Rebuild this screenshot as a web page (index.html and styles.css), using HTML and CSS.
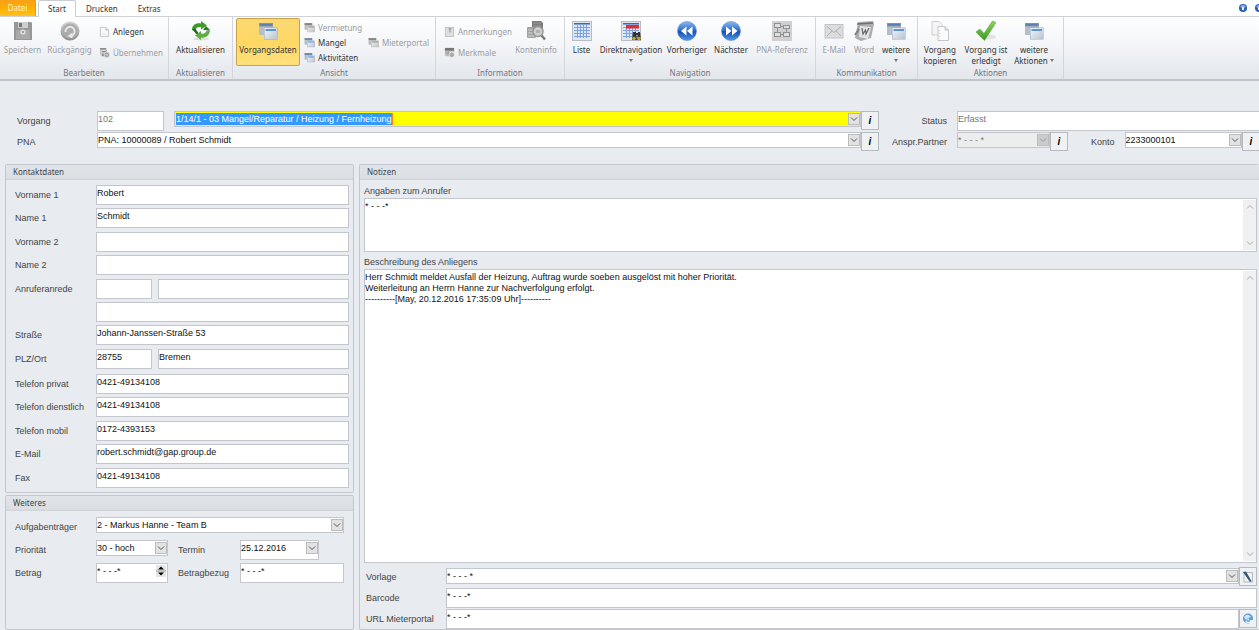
FILE: index.html
```html
<!DOCTYPE html>
<html lang="de">
<head>
<meta charset="utf-8">
<title>Vorgang 102</title>
<link rel="stylesheet" href="styles.css">
</head>
<body>
<svg class="defs" aria-hidden="true">
  <defs>
    <linearGradient id="gBlue" x1="0" y1="0" x2="0" y2="1"><stop offset="0" stop-color="#8fb9ee"/><stop offset=".45" stop-color="#2f6fd0"/><stop offset=".55" stop-color="#1650b4"/><stop offset="1" stop-color="#4f9bea"/></linearGradient>
    <linearGradient id="gWin" x1="0" y1="0" x2="1" y2="1"><stop offset="0" stop-color="#f2f5f9"/><stop offset="1" stop-color="#b9c4d3"/></linearGradient>
    <linearGradient id="gGreen" x1="0" y1="0" x2="0" y2="1"><stop offset="0" stop-color="#8ed45c"/><stop offset="1" stop-color="#3c9a28"/></linearGradient>
    <linearGradient id="gGray" x1="0" y1="0" x2="0" y2="1"><stop offset="0" stop-color="#d4d4d4"/><stop offset="1" stop-color="#8c8c8c"/></linearGradient>
  </defs>
  <symbol id="windows" viewBox="0 0 20 20">
    <rect x="1" y="2" width="14" height="12" fill="#b4bfcc"/><rect x="1" y="2" width="14" height="3.500" fill="#8193a9"/><rect x="2" y="3" width="12" height="1.500" fill="#5b7fb2"/>
    <rect x="6" y="6.500" width="13.500" height="12" fill="#9aa7b8"/><rect x="6.500" y="7" width="12.500" height="11" fill="url(#gWin)"/><rect x="7.500" y="8" width="10.500" height="2" fill="#5f93d8"/>
  </symbol>
  <symbol id="save" viewBox="0 0 20 20">
    <path d="M1 1h17l1 1v17H1z" fill="#979797"/><rect x="5" y="1" width="10" height="6" fill="#cfcfcf"/><rect x="6" y="2" width="3" height="4" fill="#777"/><rect x="3" y="9" width="14" height="9" fill="#a9a9a9"/><circle cx="10" cy="11" r="2.600" fill="#e0e0e0"/><circle cx="10" cy="11" r="1" fill="#888"/>
  </symbol>
  <symbol id="undo" viewBox="0 0 20 20">
    <circle cx="10" cy="10" r="9.500" fill="url(#gGray)"/><circle cx="10" cy="10" r="7.500" fill="#acacac"/><path d="M5.500 11a4.600 4.600 0 1 1 6 3.800" fill="none" stroke="#e8e8e8" stroke-width="2"/><path d="M12.500 11.500v6l-5-2.500z" fill="#e8e8e8"/>
  </symbol>
  <symbol id="page" viewBox="0 0 12 12">
    <path d="M1.500 1.500h6l3 3v7h-9z" fill="#fafafa" stroke="#c3c3c3"/><path d="M7.500 1.500v3h3" fill="#ddd" stroke="#c3c3c3"/><path d="M3 9h6" stroke="#ddd"/>
  </symbol>
  <symbol id="apply" viewBox="0 0 12 12">
    <path d="M1 1h7v2H1zM3 4h5v2H3zM3 7h4v3H3z" fill="#8c8c8c"/><path d="M2 3v6M8 3v4" stroke="#aaa"/><circle cx="8.500" cy="8.500" r="3" fill="#9b9b9b" stroke="#ddd"/><path d="M7 8.500h3" stroke="#eee"/>
  </symbol>
  <symbol id="refresh" viewBox="0 0 20 20">
    <ellipse cx="10" cy="18" rx="8" ry="1.500" fill="#ddd"/>
    <path d="M1 9C1 4 5 1.500 10 2.500V0l6 4.500-6 4V6C7 5.500 5 6.500 4.500 9z" fill="#3f9a2b"/><path d="M1 9c2 1 3 2 4 4h3L4 7z" fill="#226c16"/>
    <path d="M19 9c0 5-4 8.500-9 7.500V19l-6-4.500 6-4.500v2.500c3 .5 5-.5 5.500-3z" fill="#5eae45"/><path d="M19 9l-4-4-3 4h3.500z" fill="#2c7b1d"/>
  </symbol>
  <symbol id="note" viewBox="0 0 12 12">
    <rect x="1.500" y="1.500" width="9" height="10" fill="#dedede" stroke="#c2c2c2"/><path d="M5 3h3M6.500 3v4" stroke="#888"/>
  </symbol>
  <symbol id="features" viewBox="0 0 12 12">
    <rect x="1" y="1" width="10" height="9" fill="#c3c3c3"/><rect x="1" y="1" width="10" height="3" fill="#777"/><path d="M1 6.500h10M4.500 4v6" stroke="#999"/><circle cx="8.500" cy="8.500" r="3" fill="#aaa" stroke="#eee"/>
  </symbol>
  <symbol id="account" viewBox="0 0 20 20">
    <path d="M6 0h9l2 2v7H6z" fill="#7d7d7d"/><path d="M7 2h8M7 5h8" stroke="#999"/><rect x="1" y="6" width="9" height="11" rx="1" fill="#a2a2a2"/><path d="M2 9h7M2 12h7M2 15h7" stroke="#d5d5d5"/><circle cx="12" cy="10.500" r="5" fill="#cfcfcf" stroke="#979797" stroke-width="1.500"/><path d="M10 9h4v3h-4z" fill="#b0b0b0"/><path d="M15.500 14.500l3.500 4" stroke="#7a7a7a" stroke-width="2.500"/>
  </symbol>
  <symbol id="grid" viewBox="0 0 20 20">
    <rect x=".5" y=".5" width="19" height="19" fill="#e1e6ee" stroke="#b5bcc6"/><rect x="2" y="2" width="16" height="1.500" fill="#356ac0"/><rect x="2" y="4" width="16" height="13" fill="#dbe6f6"/><path d="M2 6.500h16M2 9.500h16M2 12.500h16M2 15.500h16M5.500 3v14M8.500 3v14M11.500 3v14M14.500 3v14" stroke="#7ea3dc"/>
  </symbol>
  <symbol id="gridfind" viewBox="0 0 20 20">
    <use href="#grid" width="20" height="20"/><rect x="5" y="4" width="13" height="3.500" fill="#e02d2d"/><path d="M12 11h3l1 8h-5zM17 11h2l1 8h-4z" fill="#333"/><circle cx="13" cy="17.500" r="1.800" fill="#c9a227"/><circle cx="18" cy="17.500" r="1.800" fill="#c9a227"/><path d="M14 13h4" stroke="#333" stroke-width="2"/>
  </symbol>
  <symbol id="prev" viewBox="0 0 20 20">
    <circle cx="10" cy="10" r="9.500" fill="url(#gBlue)" stroke="#5d86c6" stroke-width=".6"/><path d="M9.500 5.500v9L4 10zM15.500 5.500v9L10 10z" fill="#fff"/>
  </symbol>
  <symbol id="next" viewBox="0 0 20 20">
    <circle cx="10" cy="10" r="9.500" fill="url(#gBlue)" stroke="#5d86c6" stroke-width=".6"/><path d="M5 5.500v9l5.500-4.500zM11 5.500v9l5.500-4.500z" fill="#fff"/>
  </symbol>
  <symbol id="tree" viewBox="0 0 20 20">
    <rect width="20" height="20" fill="#d0d0d0"/><g fill="#dedede" stroke="#909090"><rect x="2.500" y="2.500" width="6" height="4"/><rect x="11.500" y="4.500" width="6" height="3"/><rect x="2.500" y="11.500" width="6" height="4"/><rect x="11.500" y="11.500" width="6" height="4"/></g><path d="M5.500 6.500v5M8.500 13.500h3M14.500 7.500v4M8.500 5.500h3" fill="none" stroke="#909090"/>
  </symbol>
  <symbol id="mail" viewBox="0 0 20 20">
    <rect x="1" y="3.500" width="18" height="13.500" fill="#dcdcdc" stroke="#c4c4c4"/><path d="M3 5.500l7 6 7-6M3 15l5-5M17 15l-5-5" fill="none" stroke="#b0b0b0"/>
  </symbol>
  <symbol id="word" viewBox="0 0 20 20">
    <path d="M4 1l15-1 1 3-3 14-10 3-6-3 1-5z" fill="#adadad"/><path d="M6 5l11 1-3 12-9-2z" fill="#e3e3e3"/><path d="M3 3l16-1" stroke="#6f6f6f" stroke-width="1.500"/><path d="M8 7l1 6 2.500-4 .5 4 3-6" fill="none" stroke="#666" stroke-width="1.200"/><path d="M1 14l4-6" stroke="#808080" stroke-width="2"/>
  </symbol>
  <symbol id="copy" viewBox="0 0 20 20">
    <path d="M2 .5h7l3 3V14H2z" fill="#f5f5f5" stroke="#cdcdcd"/><path d="M8 5.500h7l3.500 3.500v10.500H8z" fill="#fbfbfb" stroke="#c6c6c6"/><path d="M15 5.500V9h3.500" fill="#ddd" stroke="#c6c6c6"/><path d="M9.500 9v8" stroke="#ccc" stroke-dasharray="1 2"/>
  </symbol>
  <symbol id="check" viewBox="0 0 20 20">
    <ellipse cx="12" cy="16" rx="8" ry="2.500" fill="#e2e2e2"/><path d="M0 11l4-3 4 4.500L16.500 0 20 1.500 8.500 19.500z" fill="url(#gGreen)" stroke="#58a83c" stroke-width=".6"/>
  </symbol>
  <symbol id="chev" viewBox="0 0 8 8"><path d="M1 2.500l3 3 3-3" fill="none" stroke="currentColor"/></symbol>
  <symbol id="chevup" viewBox="0 0 8 8"><path d="M1 5.500l3-3 3 3" fill="none" stroke="currentColor"/></symbol>
  <symbol id="tri" viewBox="0 0 4 3"><path d="M0 0h4L2 3z" fill="#777"/></symbol>
  <symbol id="help" viewBox="0 0 8 8"><circle cx="4" cy="4" r="4" fill="#2c62b8"/><path d="M1.500 2q2.500-2 5 0v1.500h-5z" fill="#8fb4e8"/><rect x="3" y="3" width="2" height="3" fill="#e8f0fb"/></symbol>
  <symbol id="edit" viewBox="0 0 12 12"><rect x="2" y="1.500" width="8.500" height="9.500" fill="#f1f3f4" stroke="#b4bbc3"/><path d="M1 1l3-.5L9.500 10 8 11z" fill="#2c5878"/></symbol>
  <symbol id="globe" viewBox="0 0 12 12"><circle cx="6" cy="5.500" r="5" fill="#5b9bdc"/><path d="M2 4q2-3 5-2l2 2-3 1-2 2z" fill="#d3e7f9"/><path d="M3 9l4-4v2h4v3H5z" fill="#e9f4fd"/><path d="M5 8h3" stroke="#2c6ab0"/></symbol>
</svg>

<nav class="tabs">
  <button class="tab tab-file">Datei</button>
  <button class="tab tab-active">Start</button>
  <button class="tab">Drucken</button>
  <button class="tab">Extras</button>
  <div class="tab-tools">
    <button class="tool" aria-label="Hilfe"><svg><use href="#help"/></svg></button>
    <button class="tool" aria-label="Info"><svg><use href="#help"/></svg></button>
  </div>
</nav>

<div class="ribbon">
  <section class="group">
    <div class="tools tools-edit">
      <button class="big" disabled><svg><use href="#save"/></svg>Speichern</button>
      <button class="big" disabled><svg><use href="#undo"/></svg>Rückgängig</button>
      <div class="stack stack-two">
        <button class="small"><svg><use href="#page"/></svg>Anlegen</button>
        <button class="small" disabled><svg><use href="#apply"/></svg>Übernehmen</button>
      </div>
    </div>
    <h2>Bearbeiten</h2>
  </section>
  <section class="group">
    <div class="tools tools-refresh">
      <button class="big"><svg><use href="#refresh"/></svg>Aktualisieren</button>
    </div>
    <h2>Aktualisieren</h2>
  </section>
  <section class="group">
    <div class="tools tools-view">
      <button class="big big-on"><svg><use href="#windows"/></svg>Vorgangsdaten</button>
      <div class="stack">
        <button class="small" disabled><svg class="gray"><use href="#windows"/></svg>Vermietung</button>
        <button class="small"><svg><use href="#windows"/></svg>Mangel</button>
        <button class="small"><svg><use href="#windows"/></svg>Aktivitäten</button>
      </div>
      <div class="stack">
        <button class="small" disabled><svg class="gray"><use href="#windows"/></svg>Mieterportal</button>
      </div>
    </div>
    <h2>Ansicht</h2>
  </section>
  <section class="group">
    <div class="tools tools-info">
      <div class="stack stack-two">
        <button class="small" disabled><svg><use href="#note"/></svg>Anmerkungen</button>
        <button class="small" disabled><svg><use href="#features"/></svg>Merkmale</button>
      </div>
      <button class="big" disabled><svg><use href="#account"/></svg>Konteninfo</button>
    </div>
    <h2>Information</h2>
  </section>
  <section class="group">
    <div class="tools tools-nav">
      <button class="big"><svg><use href="#grid"/></svg>Liste</button>
      <button class="big"><svg><use href="#gridfind"/></svg>Direktnavigation<svg class="tri"><use href="#tri"/></svg></button>
      <button class="big"><svg><use href="#prev"/></svg>Vorheriger</button>
      <button class="big"><svg><use href="#next"/></svg>Nächster</button>
      <button class="big" disabled><svg><use href="#tree"/></svg>PNA-Referenz</button>
    </div>
    <h2>Navigation</h2>
  </section>
  <section class="group">
    <div class="tools tools-comm">
      <button class="big" disabled><svg><use href="#mail"/></svg>E-Mail</button>
      <button class="big" disabled><svg><use href="#word"/></svg>Word</button>
      <button class="big"><svg><use href="#windows"/></svg>weitere<svg class="tri"><use href="#tri"/></svg></button>
    </div>
    <h2>Kommunikation</h2>
  </section>
  <section class="group">
    <div class="tools tools-act">
      <button class="big"><svg><use href="#copy"/></svg><span>Vorgang</span><span>kopieren</span></button>
      <button class="big"><svg><use href="#check"/></svg><span>Vorgang ist</span><span>erledigt</span></button>
      <button class="big"><svg><use href="#windows"/></svg><span>weitere</span><span>Aktionen <svg class="tri"><use href="#tri"/></svg></span></button>
    </div>
    <h2>Aktionen</h2>
  </section>
</div>

<form class="page">
  <div class="head">
    <label for="vorgang">Vorgang</label>
    <div class="line">
      <input class="field field-id" id="vorgang" value="102" readonly>
      <span class="combo combo-marked"><input class="selected" aria-label="Vorgangsart" size="38" value="1/14/1 - 03 Mangel/Reparatur / Heizung / Fernheizung"><span class="arrow"><svg><use href="#chev"/></svg></span></span>
      <button type="button" class="info">i</button>
    </div>
    <label class="to-end" for="status">Status</label>
    <div class="line"><input class="field field-open" id="status" value="Erfasst" readonly></div>

    <label for="pna">PNA</label>
    <div class="line">
      <span class="combo"><select id="pna"><option>PNA: 10000089 / Robert Schmidt</option></select><span class="arrow"><svg><use href="#chev"/></svg></span></span>
      <button type="button" class="info">i</button>
    </div>
    <label class="to-end" for="partner">Anspr.Partner</label>
    <div class="line line-partner">
      <span class="combo combo-off"><select id="partner" disabled><option>* - - - *</option></select><span class="arrow"><svg><use href="#chev"/></svg></span></span>
      <button type="button" class="info">i</button>
      <label for="konto">Konto</label>
      <span class="combo"><select id="konto"><option>2233000101</option></select><span class="arrow"><svg><use href="#chev"/></svg></span></span>
      <button type="button" class="info">i</button>
    </div>
  </div>

  <div class="columns">
    <div class="side">
      <section class="panel">
        <h3>Kontaktdaten</h3>
        <div class="contact">
          <div class="rows rows-name">
            <div class="row"><label for="v1">Vorname 1</label><input class="field" id="v1" value="Robert"></div>
            <div class="row"><label for="n1">Name 1</label><input class="field" id="n1" value="Schmidt"></div>
            <div class="row"><label for="v2">Vorname 2</label><input class="field" id="v2"></div>
            <div class="row"><label for="n2">Name 2</label><input class="field" id="n2"></div>
            <div class="row row-split"><label for="an">Anruferanrede</label><input class="field" id="an"><input class="field" aria-label="Anrede Text"></div>
            <div class="row"><span></span><input class="field" aria-label="Anrede Zusatz"></div>
            <div class="row"><label for="str">Straße</label><input class="field" id="str" value="Johann-Janssen-Straße 53"></div>
            <div class="row row-split"><label for="plz">PLZ/Ort</label><input class="field" id="plz" value="28755"><input class="field" aria-label="Ort" value="Bremen"></div>
          </div>
          <div class="rows rows-phone">
            <div class="row"><label for="tp">Telefon privat</label><input class="field" id="tp" value="0421-49134108"></div>
            <div class="row"><label for="td">Telefon dienstlich</label><input class="field" id="td" value="0421-49134108"></div>
            <div class="row"><label for="tm">Telefon mobil</label><input class="field" id="tm" value="0172-4393153"></div>
            <div class="row"><label for="em">E-Mail</label><input class="field" id="em" value="robert.schmidt@gap.group.de"></div>
            <div class="row"><label for="fax">Fax</label><input class="field" id="fax" value="0421-49134108"></div>
          </div>
        </div>
      </section>

      <section class="panel panel-more">
        <h3>Weiteres</h3>
        <div class="more">
          <label for="auf">Aufgabenträger</label>
          <span class="combo combo-wide"><select id="auf"><option>2 - Markus Hanne - Team B</option></select><span class="arrow"><svg><use href="#chev"/></svg></span></span>
          <label for="prio">Priorität</label>
          <span class="combo"><select id="prio"><option>30 - hoch</option></select><span class="arrow"><svg><use href="#chev"/></svg></span></span>
          <label class="second" for="termin">Termin</label>
          <span class="combo combo-date"><input id="termin" value="25.12.2016"><span class="arrow"><svg><use href="#chev"/></svg></span></span>
          <label for="betrag">Betrag</label>
          <span class="spin"><input id="betrag" value="* - - -*"><span class="spin-keys"><svg viewBox="0 0 10 12"><path d="M2 4.500h6L5 1.500zM2 7.500h6L5 10.500z"/><path d="M0 6h10" stroke="#999"/></svg></span></span>
          <label class="second" for="bezug">Betragbezug</label>
          <input class="field" id="bezug" value="* - - -*">
        </div>
      </section>
    </div>

    <section class="panel panel-notes">
      <h3>Notizen</h3>
      <div class="notes">
        <label for="anrufer">Angaben zum Anrufer</label>
        <div class="memo"><textarea id="anrufer">* - - -*</textarea><div class="scroll"><svg><use href="#chevup"/></svg><svg><use href="#chev"/></svg></div></div>
        <label class="memo-label" for="anliegen">Beschreibung des Anliegens</label>
        <div class="memo memo-fill"><textarea id="anliegen">Herr Schmidt meldet Ausfall der Heizung, Auftrag wurde soeben ausgelöst mit hoher Priorität.
Weiterleitung an Herrn Hanne zur Nachverfolgung erfolgt.
----------[May, 20.12.2016 17:35:09 Uhr]----------</textarea><div class="scroll"><svg><use href="#chevup"/></svg><svg><use href="#chev"/></svg></div></div>
        <div class="foot">
          <div class="row"><label for="vorlage">Vorlage</label><span class="combo"><select id="vorlage"><option>* - - - *</option></select><span class="arrow"><svg><use href="#chev"/></svg></span></span><button type="button" class="info" aria-label="Vorlage bearbeiten"><svg><use href="#edit"/></svg></button></div>
          <div class="row"><label for="barcode">Barcode</label><input class="field" id="barcode" value="* - - -*"></div>
          <div class="row"><label for="url">URL Mieterportal</label><input class="field" id="url" value="* - - -*"><button type="button" class="info" aria-label="Portal öffnen"><svg><use href="#globe"/></svg></button></div>
        </div>
      </div>
    </section>
  </div>
</form>
</body>
</html>
```

FILE: styles.css
```css
* { box-sizing: border-box; }

body {
  margin: 0;
  height: 100vh;
  display: flex;
  flex-direction: column;
  overflow: hidden;
  background: #e8ebf0;
  color: #444;
  font: 9px/11px "Liberation Sans", Arial, sans-serif;
}

button, input, select, textarea {
  font: inherit;
  color: inherit;
  margin: 0;
  padding: 0;
  border: 0;
  border-radius: 0;
  background: none;
  outline: 0;
}

h2, h3 { margin: 0; font-weight: normal; }
svg { display: block; flex: none; }
.defs { position: absolute; width: 0; height: 0; }

/* Tab strip */
.tabs {
  display: flex;
  height: 17px;
  background: #fff;
  border-bottom: 1px solid #d0d2d6;
  font: 8px/16px "Noto Sans", sans-serif;
  color: #333;
}
.tab { padding: 0 9px; height: 17px; border: 1px solid transparent; border-bottom: 0; }
.tab-file {
  width: 36px;
  margin-right: 2px;
  padding: 0;
  height: 16px;
  color: #fff3c4;
  background: linear-gradient(#f9a01b, #ffae00 50%, #ffc21c);
  border: 1px solid #e99a10;
  border-width: 0 1px 0 0;
}
.tab-active { background: #fff; border-color: #c9ccd1; border-radius: 2px 2px 0 0; }
.tab-tools { display: flex; gap: 8px; margin-left: auto; margin-right: -4px; align-items: center; }
.tool svg { width: 8px; height: 8px; }

/* Ribbon */
.ribbon {
  display: flex;
  height: 64px;
  flex: none;
  background: linear-gradient(#fff, #f3f5f8 45%, #e3e6eb);
  border-bottom: 2px solid #c0c4cc;
  font: 8px/11px "Noto Sans", sans-serif;
  color: #333;
}
.group {
  display: flex;
  flex-direction: column;
  border-right: 1px solid #d3d6db;
  padding-top: 1px;
}
.group h2 { font-size: 8px; line-height: 13px; text-align: center; color: #71767f; }
.tools { display: grid; height: 50px; }
.tools-edit { grid-template-columns: 45px 49px 74px; }
.tools-refresh { grid-template-columns: 63px; }
.tools-view { grid-template-columns: 64px 64px 67px; padding-left: 3px; padding-right: 4px; }
.tools-info { grid-template-columns: 72px 50px; padding-left: 3px; padding-right: 3px; }
.tools-nav { grid-template-columns: 33px 66px 46px 42px 60px; padding-right: 3px; }
.tools-comm { grid-template-columns: 32px 28px 36px; padding-left: 2px; padding-right: 3px; }
.tools-act { grid-template-columns: 44px 48px 48px; padding-right: 5px; }

.big {
  display: flex;
  flex-direction: column;
  align-items: center;
  padding-top: 3px;
  white-space: nowrap;
  border: 0 solid #c9a24a;
  border-radius: 2px;
}
.big > svg:first-child { width: 20px; height: 20px; margin-bottom: 3px; }
.big span { display: flex; align-items: center; gap: 2px; }
.big .tri { width: 4px; height: 3px; }
.big > .tri { margin-top: 4px; }
.big-on {
  padding-top: 2px;
  border-width: 1px;
  background: linear-gradient(#fbd873, #ffd864 50%, #ffe07c);
}
.stack { display: flex; flex-direction: column; justify-content: center; gap: 4px; padding-left: 4px; }
.stack-two { gap: 10px; padding-left: 5px; }
.small { display: flex; align-items: center; gap: 3px; white-space: nowrap; }
.small svg { width: 11px; height: 11px; }
.gray { filter: grayscale(1); }
.big:disabled, .small:disabled { color: #9a9da2; }

/* Shared form controls */
.field, .combo, .spin {
  background: #fff;
  border: 1px solid #c3c7cd;
  color: #111;
  min-width: 0;
}
.field { height: 20px; padding: 0 0 4px; }
.combo { display: flex; position: relative; height: 16px; flex: 1; }
.combo select, .combo input { appearance: none; flex: 1; min-width: 0; }
.arrow {
  position: absolute;
  top: 1px;
  right: 0;
  width: 12px;
  height: 12px;
  display: grid;
  place-items: center;
  background: #e2e2e2;
  border: 1px solid #bcbcbc;
  color: #555;
  pointer-events: none;
}
.arrow svg { width: 8px; height: 8px; }
.info {
  width: 18px;
  height: 19px;
  flex: none;
  display: grid;
  place-items: center;
  background: #f0f1f3;
  border: 1px solid #b5b9c0;
  color: #000;
  font: italic bold 10px/12px "Liberation Sans", Arial, sans-serif;
}
.info svg { width: 12px; height: 12px; }
.field:read-only { color: #777; }

/* Record header */
.page { flex: 1; min-height: 0; display: flex; flex-direction: column; padding-top: 30px; }
.head {
  display: grid;
  grid-template-columns: 80px 1fr 68px 313px;
  grid-auto-rows: 21px;
  padding-left: 17px;
  margin-right: -1px;
}
.head label { line-height: 21px; }
.to-end { text-align: right; }
.to-end + .line { padding-left: 10px; }
.line { display: flex; align-items: flex-start; }
.field-id { width: 67px; margin-right: 10px; }
.field-open { flex: 1; border-right: 0; }
.combo-marked { background: #ff0; padding: 1px 0 1px 1px; }
.combo .selected {
  flex: none;
  field-sizing: content;
  background: #3399ff;
  color: #fff;
  border-right: 1px solid #ff8a00;
}
.combo-off { background: #eceded; }
.combo-off select { color: #777; opacity: 1; }
.combo-off .arrow { background: #ccc; color: #999; }
.line-partner .combo { flex: 0 0 93px; }
.line-partner label { margin: 0 10px 0 23px; }
.line-partner label + .combo { flex: 1; }

/* Panels */
.columns {
  flex: 1;
  min-height: 0;
  display: grid;
  grid-template-columns: 349px 1fr;
  gap: 5px;
  padding: 11px 0 0 5px;
}
.side { display: flex; flex-direction: column; gap: 2px; min-height: 0; }
.panel { display: flex; flex-direction: column; border: 1px solid #c3c7cd; border-radius: 2px; min-height: 0; }
.side .panel:first-child { flex: 1; }
.panel-more { height: 135px; flex: none; }
.panel-notes { border-right: 0; }
.panel h3 {
  padding: 0 7px;
  font: 8px/14px "Noto Sans", sans-serif;
  background: linear-gradient(#e1e5e9, #dadde2);
  border-bottom: 1px solid #d0d4d9;
}

.contact { flex: 1; display: flex; flex-direction: column; gap: 2px; padding: 5px 4px 1px 9px; min-height: 0; }
.rows { display: grid; grid-auto-rows: 1fr; }
.rows-name { flex: 8 1 0; }
.rows-phone { flex: 5 1 0; }
.row { display: flex; align-items: flex-start; }
.row label { line-height: 21px; }
.rows .row { display: grid; grid-template-columns: 81px 1fr; }
.rows .row-split { grid-template-columns: 81px 56px 1fr; }
.row-split .field + .field { margin-left: 6px; }

.more {
  display: grid;
  grid-template-columns: 81px 72px 72px 104px;
  grid-auto-rows: 20px;
  row-gap: 3px;
  padding: 6px 9px;
  align-items: start;
}
.more label { line-height: 20px; }
.combo-wide { grid-column: 2 / 5; }
.combo-date { width: 79px; height: 20px; }
.combo-date input { padding-bottom: 4px; }
.second { padding-left: 10px; }
.spin { display: flex; height: 20px; }
.spin input { flex: 1; min-width: 0; padding: 0 0 4px; }
.spin-keys { width: 10px; height: 12px; margin: 1px; background: #e6e6e6; }
.spin-keys svg { width: 10px; height: 12px; }

.notes { flex: 1; display: flex; flex-direction: column; padding: 4px 2px 0 4px; min-height: 0; }
.notes > label { line-height: 14px; }
.memo { display: flex; height: 54px; background: #fff; border: 1px solid #c3c7cd; color: #111; }
.memo textarea { flex: 1; resize: none; overflow: hidden; padding: 2px 0; }
.memo-label { margin-top: 3px; }
.memo-fill { flex: 1; height: auto; min-height: 0; }
.scroll {
  width: 13px;
  margin: 1px 0;
  padding: 3px 0;
  display: flex;
  flex-direction: column;
  align-items: center;
  justify-content: space-between;
  background: #f0f0f0;
  color: #aaa;
}
.scroll svg { width: 8px; height: 8px; }
.foot { display: grid; gap: 1px; padding-top: 4px; }
.foot label { width: 82px; padding-left: 2px; line-height: 20px; }
.foot .field { flex: 1; }
.foot .combo { margin-top: 1px; }
```
